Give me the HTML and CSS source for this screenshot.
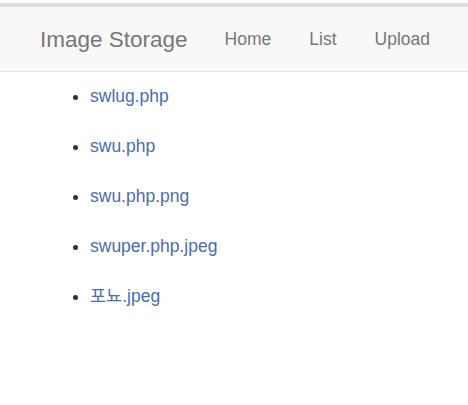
FILE: index.html
```html
<!DOCTYPE html>
<html lang="ko">
<head>
  <meta charset="UTF-8">
  <title>Image Storage</title>
  <link rel="stylesheet" href="styles.css">
</head>
<body>
  <div class="top-strip"></div>

  <!-- Navbar -->
  <nav class="navbar">
    <a class="navbar-brand" href="#">Image Storage</a>
    <ul class="nav">
      <li><a href="#">Home</a></li>
      <li><a href="#">List</a></li>
      <li><a href="#">Upload</a></li>
    </ul>
  </nav>

  <!-- Lista de arquivos -->
  <ul class="file-list">
    <li><a href="#">swlug.php</a></li>
    <li><a href="#">swu.php</a></li>
    <li><a href="#">swu.php.png</a></li>
    <li><a href="#">swuper.php.jpeg</a></li>
    <li><a href="#">포뇨.jpeg</a></li>
  </ul>
</body>
</html>
```

FILE: styles.css
```css
body {
  margin: 0;
  font-family: "Liberation Sans", Arial, "Noto Sans CJK KR", sans-serif;
  font-size: 17.5px;
  line-height: 25px;
  color: #333;
  background: #fff;
}
a {
  text-decoration: none;
}
.top-strip {
  margin-top: 3px;
  height: 4px;
  background-color: #dcdce0;
}
.navbar {
  display: flex;
  align-items: center;
  height: 64px;
  padding-left: 21px;
  background-color: #f8f8f8;
  border-bottom: 1px solid #e7e7e7;
}
.navbar-brand {
  padding: 0 18px 0 19px;
  font-size: 22.5px;
  color: #777;
}
.nav {
  display: flex;
  list-style: none;
  margin: 0;
  padding: 0;
}
.nav a {
  display: block;
  padding: 0 19px;
  color: #777;
}
.file-list {
  margin: 12px 0 0 40px;
  padding-left: 50px;
}
.file-list li {
  margin-bottom: 25px;
}
.file-list a {
  color: #4a6db2;
}
```
